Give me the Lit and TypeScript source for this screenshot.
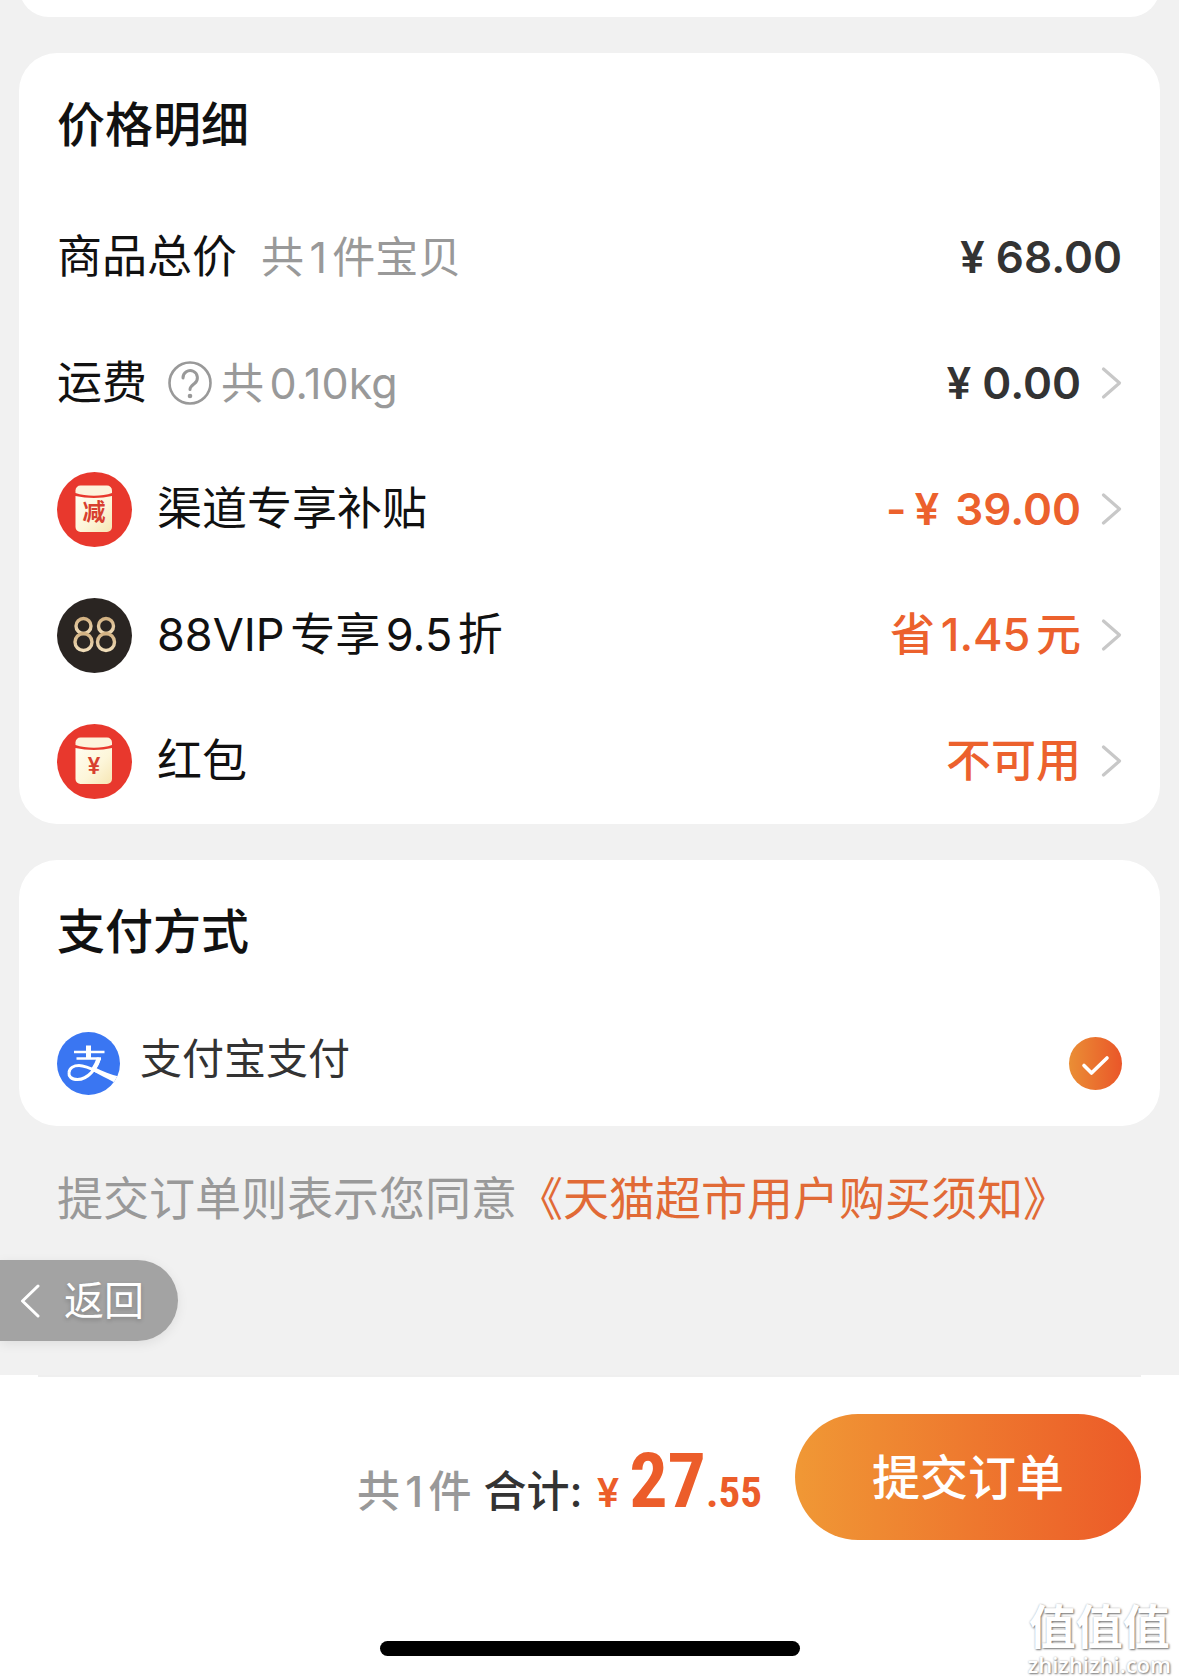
import { LitElement, html, svg, css, nothing } from "lit";
import { customElement, property } from "lit/decorators.js";

type IconName = "discount" | "vip" | "packet";

interface PriceRow {
  label: string;
  note?: string;
  help?: boolean;
  icon?: IconName;
  minus?: boolean;
  value: string;
  amount?: boolean;
  accent?: boolean;
  link?: boolean;
}

const ROWS: PriceRow[] = [
  { label: "商品总价", note: "共1件宝贝", value: "¥ 68.00", amount: true },
  { label: "运费", note: "共0.10kg", help: true, value: "¥ 0.00", amount: true, link: true },
  { label: "渠道专享补贴", icon: "discount", minus: true, value: "39.00", amount: true, accent: true, link: true },
  { label: "88VIP专享9.5折", icon: "vip", value: "省1.45元", accent: true, link: true },
  { label: "红包", icon: "packet", value: "不可用", accent: true, link: true },
];

const envelope = (mark: string, y: number) => svg`
  <defs>
    <linearGradient id="paper" x1="0" y1="0" x2="1" y2="1">
      <stop offset="0" stop-color="#fffdf0" />
      <stop offset="0.55" stop-color="#fdf6da" />
      <stop offset="1" stop-color="#f6e6b4" />
    </linearGradient>
  </defs>
  <circle cx="37.5" cy="37.5" r="37.5" fill="#e8382d" />
  <path d="M18.500 24C30 26.500 44 26.500 55 24V55a5 5 0 0 1-5 5H23.500a5 5 0 0 1-5-5Z" fill="url(#paper)" />
  <path d="M18.500 21V18.500a5 5 0 0 1 5-5H50a5 5 0 0 1 5 5V21C45 24.500 29 24.500 18.500 21Z" fill="#fdf3dc" />
  <text class="mark" x="37" y=${y} font-size="23" text-anchor="middle" fill="#d8402f">${mark}</text>`;

@customElement("row-icon")
export class RowIcon extends LitElement {
  @property() name: IconName = "packet";

  static styles = css`
    :host { display: block; flex: none; width: 75px; height: 75px; }
    svg { display: block; width: 100%; height: 100%; }
    .mark { font-family: "Inter", "Noto Sans CJK SC", sans-serif; font-weight: 600; }
  `;

  render() {
    return html`<svg viewBox="0 0 75 75" aria-hidden="true">
      ${this.name === "discount"
        ? envelope("减", 48)
        : this.name === "packet"
        ? envelope("¥", 50)
        : svg`
          <defs>
            <linearGradient id="gold" x1="0" y1="0" x2="0" y2="1">
              <stop offset="0" stop-color="#d3b283" />
              <stop offset="1" stop-color="#f0dcb8" />
            </linearGradient>
          </defs>
          <circle cx="37.5" cy="37.5" r="37.5" fill="#2a2522" />
          <g fill="none" stroke="url(#gold)" stroke-width="3.4">
            <ellipse cx="26.5" cy="28" rx="7.5" ry="7.5" />
            <ellipse cx="26.5" cy="44" rx="8.5" ry="8.5" />
            <ellipse cx="49" cy="28" rx="7.5" ry="7.5" />
            <ellipse cx="49" cy="44" rx="8.5" ry="8.5" />
          </g>`}
    </svg>`;
  }
}

@customElement("app-root")
export class AppRoot extends LitElement {
  static styles = css`
    :host {
      display: block;
      font-family: "Inter", "Noto Sans CJK SC", sans-serif;
      font-size: 45px;
      line-height: 60px;
      color: #111;
      text-autospace: normal;
    }
    * { box-sizing: border-box; }
    button {
      font: inherit;
      color: inherit;
      border: 0;
      padding: 0;
      background: none;
      text-align: left;
      cursor: pointer;
    }
    svg { display: block; flex: none; }
    .page {
      position: relative;
      display: flex;
      flex-direction: column;
      min-height: 100vh;
      overflow: hidden;
      background: #fff;
    }
    .content {
      display: flex;
      flex-direction: column;
      gap: 36px;
      background: #f1f1f1;
    }
    .card {
      margin: 0 19px;
      padding: 0 38px;
      border-radius: 38px;
      background: #fff;
    }
    .card.previous { height: 60px; margin-top: -43px; }
    .title {
      margin: 0;
      padding: 42px 0 39px;
      font-size: 48px;
      font-weight: 500;
    }
    .list { margin: 0; padding: 0; list-style: none; }
    .row {
      display: flex;
      align-items: center;
      width: 100%;
      height: 126px;
    }
    .row-icon { margin-right: 25px; }
    .note { margin-left: 24px; font-size: 43px; color: #999; }
    .help { margin-left: 21px; }
    .help + .note { margin-left: 9px; }
    .value { margin-left: auto; font-weight: 500; color: #333; }
    .value.accent { color: #ec612d; }
    .value.amount { font-size: 44px; font-weight: 600; }
    .minus-yen { margin: 0 16px 0 8px; }
    .chevron { margin-left: 20px; }
    .pay { display: flex; align-items: center; height: 125px; font-size: 42px; color: #333; }
    .pay-name { margin: 0 auto 10px 20px; }
    .pick { display: grid; }
    .pick > * { grid-area: 1 / 1; }
    .radio {
      appearance: none;
      width: 53px;
      height: 53px;
      margin: 0;
      border-radius: 50%;
      background: linear-gradient(90deg, #ea8e35, #ea5629);
    }
    .tick { pointer-events: none; }
    .lower { display: flex; flex-direction: column; align-items: flex-start; gap: 32px; margin-top: 6px; padding-bottom: 34px; }
    .terms { margin: 0; padding-left: 57px; font-size: 46px; color: #999; }
    .terms a { color: #e16a36; text-decoration: none; }
    .back {
      display: flex;
      align-items: center;
      gap: 24px;
      height: 81px;
      padding: 0 34px 0 20px;
      border-radius: 0 41px 41px 0;
      background: #a3a3a3;
      box-shadow: 0 3px 12px rgba(0, 0, 0, 0.08);
      font-size: 40px;
      color: #fff;
      text-shadow: 0 2px 4px rgba(0, 0, 0, 0.2);
    }
    .footer { flex: 1; display: flex; flex-direction: column; }
    .edge { height: 2px; margin: 0 38px; background: #efefef; }
    .bar {
      display: flex;
      align-items: center;
      justify-content: flex-end;
      gap: 33px;
      padding: 37px 38px 0;
    }
    .sum { display: flex; align-items: baseline; margin: 0; padding-top: 20px; font-weight: 500; font-size: 43px; }
    .count { color: #999; }
    .total { margin: 0 14px 0 12px; color: #333; }
    .money { font-family: "Roboto Condensed", "Roboto", sans-serif; font-weight: 700; font-size: 43px; color: #ec5d2a; }
    .yen { margin-right: 10px; font-family: "Inter", sans-serif; font-weight: 600; font-size: 40px; }
    .whole { font-size: 76px; }
    .submit {
      width: 346px;
      height: 126px;
      padding-top: 2px;
      border-radius: 63px;
      background: linear-gradient(90deg, #f09835, #ec5a28);
      font-size: 48px;
      font-weight: 500;
      text-align: center;
      color: #fff;
    }
    .home {
      width: 420px;
      height: 15px;
      margin: auto auto 24px;
      border-radius: 8px;
      background: #000;
    }
    .watermark {
      position: absolute;
      right: 8px;
      bottom: 4px;
      display: flex;
      flex-direction: column;
      align-items: center;
      gap: 4px;
      font-family: "Noto Sans CJK SC", sans-serif;
      font-weight: 700;
      font-size: 47px;
      line-height: 48px;
      color: #fff;
      text-shadow: 1px 1px 2px #777, 0 0 2px #bbb;
    }
    .site { font-family: "Open Sans", sans-serif; font-size: 22px; font-weight: 600; line-height: 24px; }
  `;

  private renderRow(row: PriceRow) {
    const body = html`
      ${row.icon ? html`<row-icon class="row-icon" name=${row.icon}></row-icon>` : nothing}
      <span>${row.label}</span>
      ${row.help
        ? html`<svg class="help" width="44" height="44" viewBox="0 0 44 44" fill="none" stroke="#999" stroke-width="2.6" stroke-linecap="round" aria-hidden="true">
            <circle cx="22" cy="22" r="20.5" />
            <path d="M15 17a7.200 7.200 0 1 1 11.500 5.500C24 24.500 22 25.800 22 28.500" stroke-width="3" />
            <circle cx="22" cy="35" r="2.3" fill="#999" stroke="none" />
          </svg>`
        : nothing}
      ${row.note ? html`<span class="note">${row.note}</span>` : nothing}
      <span class="value ${row.amount ? "amount" : ""} ${row.accent ? "accent" : ""}">${row.minus ? html`-<span class="minus-yen">¥</span>` : nothing}${row.value}</span>
      ${row.link
        ? html`<svg class="chevron" width="21" height="34" viewBox="0 0 21 34" fill="none" stroke="#c8c8c8" stroke-width="3.2" stroke-linecap="round" stroke-linejoin="round" aria-hidden="true">
            <path d="M2.500 3 18.500 17 2.500 31" />
          </svg>`
        : nothing}`;
    return html`<li>
      ${row.link ? html`<button class="row" type="button">${body}</button>` : html`<div class="row">${body}</div>`}
    </li>`;
  }

  render() {
    return html`<div class="page">
      <main class="content">
        <div class="card previous"></div>

        <section class="card">
          <h2 class="title">价格明细</h2>
          <ul class="list">${ROWS.map((row) => this.renderRow(row))}</ul>
        </section>

        <section class="card">
          <h2 class="title">支付方式</h2>
          <label class="pay">
            <svg width="63" height="63" viewBox="0 0 63 63" aria-hidden="true">
              <defs><clipPath id="disc"><circle cx="31.5" cy="31.5" r="31.5" /></clipPath></defs>
              <g clip-path="url(#disc)">
                <rect width="63" height="63" fill="#3a76f2" />
                <path d="M38 35.500C46 39.500 54 43 64 45V54L56.500 50C50 46.500 43 43 36 39Z" fill="#fff" />
                <g fill="none" stroke="#fff">
                  <path d="M31.500 13.500V27" stroke-width="5" />
                  <path d="M17 20H47.500" stroke-width="2.6" />
                  <path d="M19.500 26.500H44" stroke-width="2.6" />
                  <path d="M42.500 26C39 37 31 47.500 20.500 47.500C14 47.500 11.500 44 12 40.500C12.500 36 17 33.500 22 33.500C28 33.500 34 36.500 41 40" stroke-width="3" />
                  <path d="M42 26C40.500 31 38.500 34.500 36 38" stroke-width="4.4" />
                </g>
              </g>
            </svg>
            <span class="pay-name">支付宝支付</span>
            <span class="pick">
              <input class="radio" type="radio" name="pay" checked />
              <svg class="tick" width="53" height="53" viewBox="0 0 53 53" fill="none" stroke="#fff" stroke-width="3.6" stroke-linecap="round" stroke-linejoin="round" aria-hidden="true">
                <path d="M15 28.500 22.500 36 38 21" />
              </svg>
            </span>
          </label>
        </section>

        <div class="lower">
          <p class="terms">提交订单则表示您同意<a href="#terms">《天猫超市用户购买须知》</a></p>
          <button class="back" type="button">
            <svg width="20" height="34" viewBox="0 0 20 34" fill="none" stroke="#fff" stroke-width="3" stroke-linecap="round" stroke-linejoin="round" aria-hidden="true">
              <path d="M18 2 2.500 17 18 32" />
            </svg>
            <span>返回</span>
          </button>
        </div>
      </main>

      <footer class="footer">
        <div class="edge"></div>
        <div class="bar">
          <p class="sum">
            <span class="count">共1件</span>
            <span class="total">合计:</span>
            <span class="money"><span class="yen">¥</span><span class="whole">27</span>.55</span>
          </p>
          <button class="submit" type="button">提交订单</button>
        </div>
        <div class="home"></div>
      </footer>

      <div class="watermark"><span>值值值</span><span class="site">zhizhizhi.com</span></div>
    </div>`;
  }
}
